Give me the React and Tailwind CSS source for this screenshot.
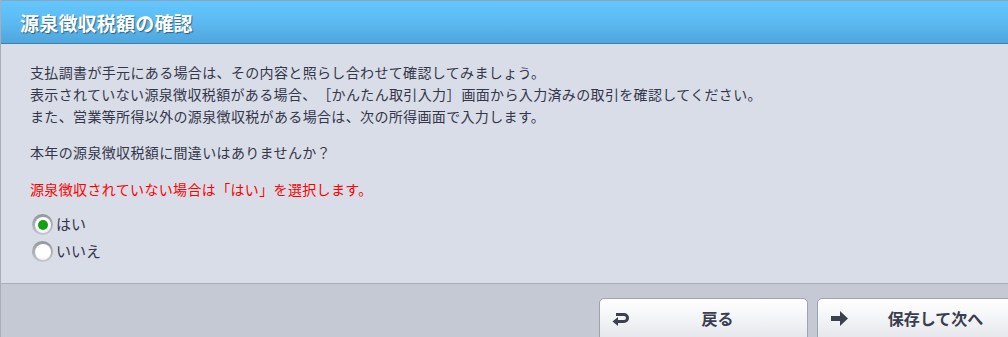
import React from "react";

const jp = { fontFamily: '"Noto Sans CJK JP", "Noto Sans", sans-serif' };

function Radio({ checked, label }) {
  return (
    <label className="flex items-center h-[27px]">
      <span className="relative w-[21px] h-[21px] rounded-full bg-[linear-gradient(180deg,#92969e,#c4c7ce)] flex items-center justify-center">
        <span className="w-[16px] h-[16px] rounded-full bg-[radial-gradient(circle_at_50%_40%,#ffffff_55%,#e2e4e9)] flex items-center justify-center">
          {checked && <span className="w-[10px] h-[10px] rounded-full bg-[#13a013]" />}
        </span>
      </span>
      <span className="ml-[3px] text-[15px] text-[#34374d]">{label}</span>
    </label>
  );
}

export default function App() {
  return (
    <div className="w-[1008px] h-[337px] overflow-hidden border-l border-[#a9adb8] bg-[#d9dde7] flex flex-col" style={jp}>
      <div className="h-[44px] shrink-0 border-t border-[#8aa6ba] border-b border-b-[#3f7faa] bg-[linear-gradient(180deg,#64c6fe,#5cbaf2_50%,#4ea6dc)] flex items-center pl-[19px]">
        <span className="text-white font-bold text-[19px] leading-none tracking-[0.2px] [text-shadow:1px_1px_1px_rgba(0,0,0,0.45)]">源泉徴収税額の確認</span>
      </div>
      <div className="flex-1 pl-[29px] pt-[17px] text-[14px] text-[#34374b] tracking-[0.35px]">
        <div className="leading-[22px]">
          <p>支払調書が手元にある場合は、その内容と照らし合わせて確認してみましょう。</p>
          <p>
            表示されていない源泉徴収税額がある場合、
            <span className="inline-block w-[15px] text-right">［</span>
            かんたん取引入力
            <span className="inline-block w-[15px] text-left">］</span>
            画面から入力済みの取引を確認してください。
          </p>
          <p>また、営業等所得以外の源泉徴収税がある場合は、次の所得画面で入力します。</p>
        </div>
        <p className="leading-[22px] mt-[14px]">本年の源泉徴収税額に間違いはありませんか？</p>
        <p className="leading-[22px] mt-[15px] text-[#ff0000]">源泉徴収されていない場合は「はい」を選択します。</p>
        <div className="mt-[11px] pl-[2px] tracking-normal">
          <Radio checked label="はい" />
          <Radio label="いいえ" />
        </div>
      </div>
      <div className="h-[54px] shrink-0 border-t border-[#a9adb8] bg-[#c5c9d3] flex items-start pt-[14px] pl-[598px] gap-[9px]">
        <button className="relative w-[209px] h-[48px] shrink-0 rounded-t-[5px] border border-[#9fa3ad] bg-[linear-gradient(180deg,#ffffff,#f1f2f5_50%,#dfe2e8)] flex items-start pt-[7px] justify-center pl-[28px]">
          <svg className="absolute left-[12px] top-[12px]" width="18" height="15" viewBox="0 0 18 15">
            <path d="M4 3.5 H12 a3.5 3.5 0 0 1 0 7 H4" fill="none" stroke="#3c4150" strokeWidth="3" />
            <path d="M0.5 10.5 L6 6 V15 Z" fill="#3c4150" />
          </svg>
          <span className="text-[16px] font-bold text-[#3a3d50]">戻る</span>
        </button>
        <button className="relative w-[209px] h-[48px] shrink-0 rounded-t-[5px] border border-[#9fa3ad] bg-[linear-gradient(180deg,#ffffff,#f1f2f5_50%,#dfe2e8)] flex items-start pt-[7px] justify-center pl-[28px]">
          <svg className="absolute left-[13px] top-[12px]" width="18" height="15" viewBox="0 0 18 15">
            <rect x="0" y="5" width="10" height="5" fill="#3c4150" />
            <path d="M9 0 L17 7.5 L9 15 Z" fill="#3c4150" />
          </svg>
          <span className="text-[16px] font-bold text-[#3a3d50]">保存して次へ</span>
        </button>
      </div>
    </div>
  );
}
